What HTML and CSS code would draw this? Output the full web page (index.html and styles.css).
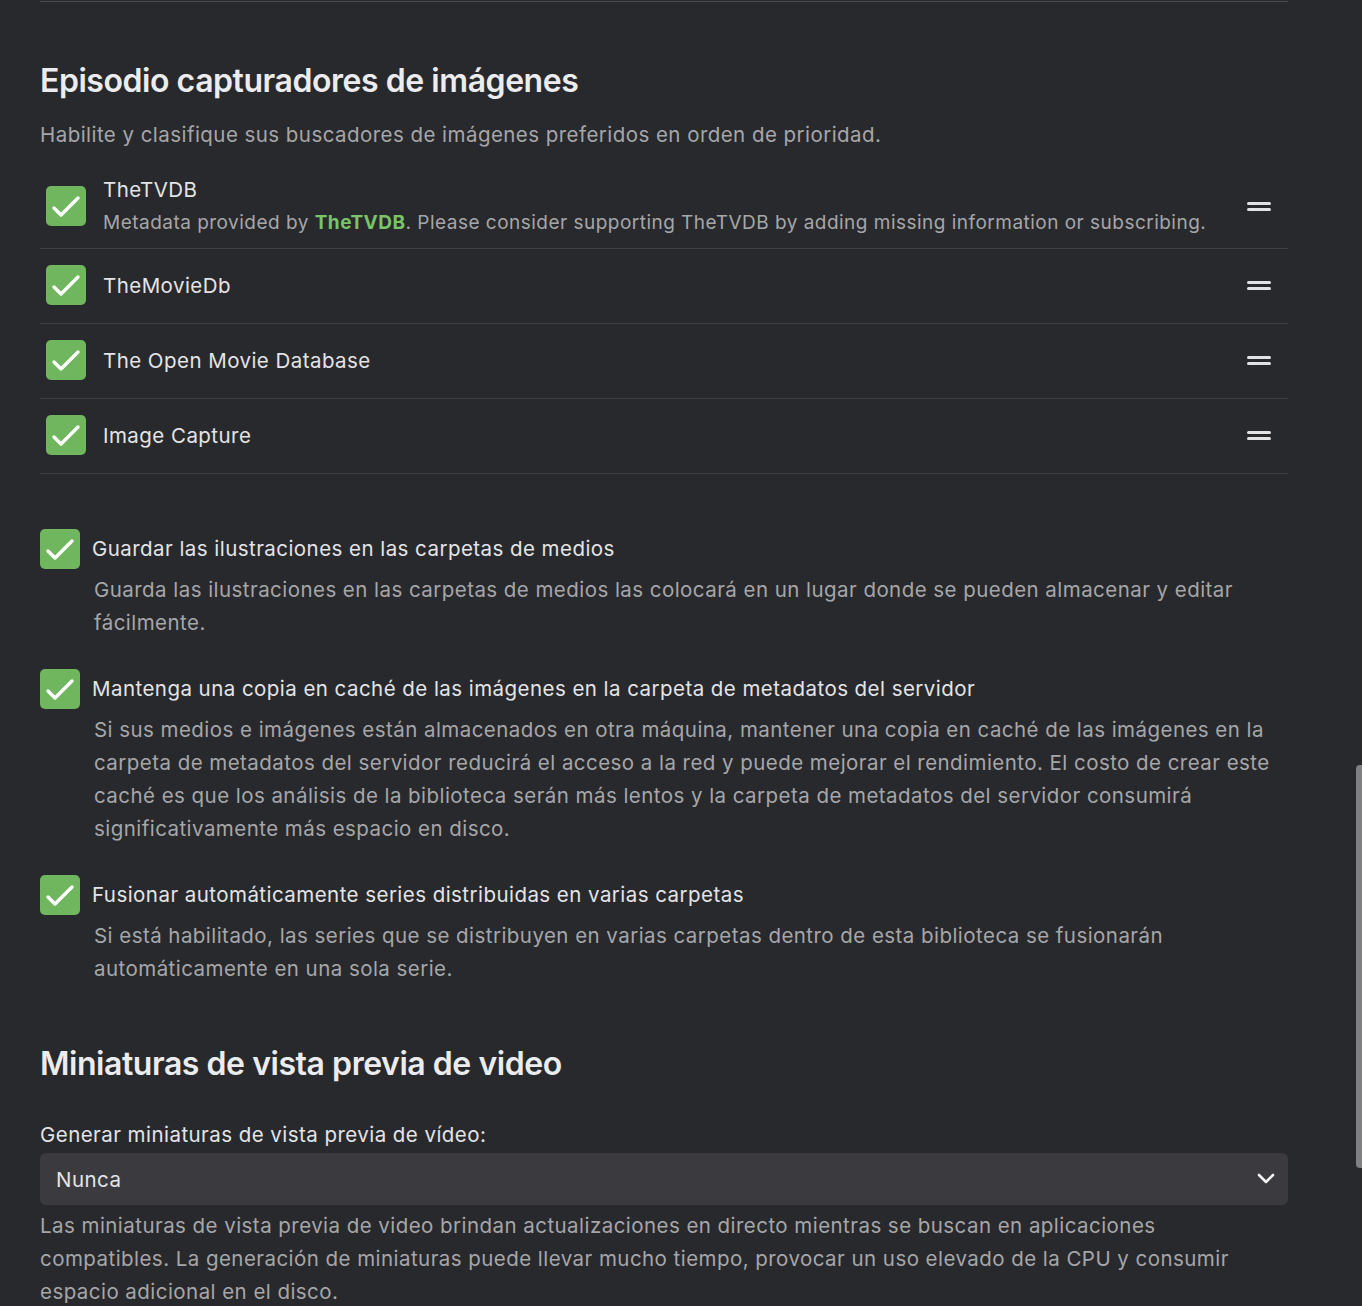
FILE: index.html
```html
<!DOCTYPE html>
<html lang="es">
<head>
    <meta charset="UTF-8" />
    <meta name="viewport" content="width=device-width, initial-scale=1" />
    <title>Biblioteca | Imágenes</title>
    <link rel="stylesheet" href="styles.css">
</head>
<body>
<div class="page">
    <hr class="rule">

    <h2>Episodio capturadores de imágenes</h2>
    <p class="intro">Habilite y clasifique sus buscadores de imágenes preferidos en orden de prioridad.</p>

    <ul class="fetchers">
        <li class="fetcher has-note">
            <span class="box"><svg viewBox="0 0 40 40"><path d="M8 22 L15 29 L32 12" /></svg></span>
            <div class="fetcher-text">
                <div class="fetcher-name">TheTVDB</div>
                <div class="fetcher-note">Metadata provided by <a href="#">TheTVDB</a>. Please consider supporting TheTVDB by adding missing information or subscribing.</div>
            </div>
            <span class="handle"></span>
        </li>
        <li class="fetcher">
            <span class="box"><svg viewBox="0 0 40 40"><path d="M8 22 L15 29 L32 12" /></svg></span>
            <div class="fetcher-text">
                <div class="fetcher-name">TheMovieDb</div>
            </div>
            <span class="handle"></span>
        </li>
        <li class="fetcher">
            <span class="box"><svg viewBox="0 0 40 40"><path d="M8 22 L15 29 L32 12" /></svg></span>
            <div class="fetcher-text">
                <div class="fetcher-name">The Open Movie Database</div>
            </div>
            <span class="handle"></span>
        </li>
        <li class="fetcher">
            <span class="box"><svg viewBox="0 0 40 40"><path d="M8 22 L15 29 L32 12" /></svg></span>
            <div class="fetcher-text">
                <div class="fetcher-name">Image Capture</div>
            </div>
            <span class="handle"></span>
        </li>
    </ul>

    <div class="options">
        <div class="option">
            <label class="option-label">
                <span class="box"><svg viewBox="0 0 40 40"><path d="M8 22 L15 29 L32 12" /></svg></span>
                Guardar las ilustraciones en las carpetas de medios
            </label>
            <p class="option-desc">Guarda las ilustraciones en las carpetas de medios las colocará en un lugar donde se pueden almacenar y editar fácilmente.</p>
        </div>
        <div class="option">
            <label class="option-label">
                <span class="box"><svg viewBox="0 0 40 40"><path d="M8 22 L15 29 L32 12" /></svg></span>
                Mantenga una copia en caché de las imágenes en la carpeta de metadatos del servidor
            </label>
            <p class="option-desc">Si sus medios e imágenes están almacenados en otra máquina, mantener una copia en caché de las imágenes en la carpeta de metadatos del servidor reducirá el acceso a la red y puede mejorar el rendimiento. El costo de crear este caché es que los análisis de la biblioteca serán más lentos y la carpeta de metadatos del servidor consumirá significativamente más espacio en disco.</p>
        </div>
        <div class="option">
            <label class="option-label">
                <span class="box"><svg viewBox="0 0 40 40"><path d="M8 22 L15 29 L32 12" /></svg></span>
                Fusionar automáticamente series distribuidas en varias carpetas
            </label>
            <p class="option-desc">Si está habilitado, las series que se distribuyen en varias carpetas dentro de esta biblioteca se fusionarán automáticamente en una sola serie.</p>
        </div>
    </div>

    <h2 class="second">Miniaturas de vista previa de video</h2>

    <div class="field">
        <label class="field-label" for="thumbs">Generar miniaturas de vista previa de vídeo:</label>
        <div class="select">
            <span>Nunca</span>
            <svg class="chevron" viewBox="0 0 18 12"><path d="M2 2 L9 9 L16 2" /></svg>
        </div>
        <p class="field-desc">Las miniaturas de vista previa de video brindan actualizaciones en directo mientras se buscan en aplicaciones compatibles. La generación de miniaturas puede llevar mucho tiempo, provocar un uso elevado de la CPU y consumir espacio adicional en el disco.</p>
    </div>
</div>

<div class="scrollbar"></div>
</body>
</html>
```

FILE: styles.css
```css
html, body { margin: 0; padding: 0; background: #28292c; }
body { font-family: Inter, "Noto Sans", sans-serif; color: #e4e4e6; overflow: hidden; letter-spacing: 0.45px; }
.page { width: 1248px; padding: 1px 0 0 40px; }
.rule { margin: 0; border: none; border-top: 1px solid #4a4b4e; }

h2 { margin: 59px 0 0; font-size: 32px; line-height: 40px; font-weight: 600; color: #ececee; letter-spacing: -0.45px; }
h2.second { margin-top: 59px; }
.intro { margin: 17px 0 0; font-size: 20.5px; line-height: 33px; color: #a6a6a9; }

.fetchers { list-style: none; margin: 19px 0 0; padding: 0; }
.fetcher { display: flex; align-items: center; min-height: 62px; padding: 5px 6px 7px; border-bottom: 1px solid #3f4043; }
.fetcher.has-note { padding-top: 3px; padding-bottom: 9px; }
.fetcher-text { flex: 1; margin-left: 17px; }
.fetcher-name { font-size: 20.5px; line-height: 33px; color: #e4e4e6; }
.fetcher-note { font-size: 19px; line-height: 33px; color: #a6a6a9; letter-spacing: 0.48px; }
.fetcher-note a { color: #78c466; font-weight: 700; text-decoration: none; }

.box { flex: none; display: inline-block; width: 40px; height: 40px; border-radius: 5px; background: #6fb65e; }
.box svg { display: block; width: 40px; height: 40px; fill: none; stroke: #fff; stroke-width: 3.4; stroke-linecap: round; stroke-linejoin: round; }

.handle { flex: none; position: relative; width: 24px; height: 9px; margin-right: 11px; }
.handle::before, .handle::after { content: ""; position: absolute; left: 0; right: 0; height: 3px; border-radius: 2px; background: #e2e2e4; }
.handle::before { top: 0; }
.handle::after { bottom: 0; }

.options { margin-top: 55px; display: flex; flex-direction: column; gap: 30px; }
.option-label { display: flex; align-items: center; gap: 12px; font-size: 20.5px; line-height: 40px; color: #e4e4e6; }
.option-desc { margin: 4px 0 0 54px; font-size: 20.5px; line-height: 33px; color: #a6a6a9; }

.field { margin-top: 36px; }
.field-label { display: block; font-size: 20.5px; line-height: 30px; color: #e4e4e6; }
.select { margin-top: 3px; height: 52px; display: flex; align-items: center; justify-content: space-between; padding: 0 13px 0 16px; background: #3a3a3f; border-radius: 6px; font-size: 20.5px; color: #e4e4e6; }
.chevron { width: 18px; height: 12px; fill: none; stroke: #f2f2f2; stroke-width: 2.6; stroke-linecap: round; stroke-linejoin: round; }
.field-desc { max-width: 1220px; margin: 4px 0 0; font-size: 20.5px; line-height: 33px; color: #a6a6a9; }

.scrollbar { position: fixed; right: 0; top: 765px; width: 6px; height: 403px; background: #808083; border-radius: 4px 0 0 4px; }
```
